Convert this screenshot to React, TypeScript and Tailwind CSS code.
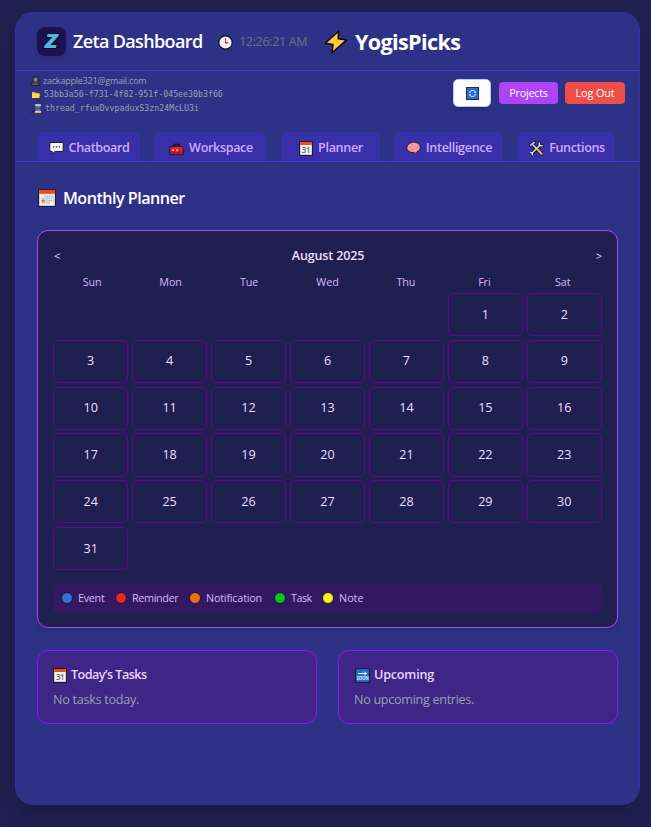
import type { ReactNode } from 'react';

type IconProps = { className?: string };

function Logo() {
  return (
    <svg viewBox="0 0 29 29" className="h-[29px] w-[29px] shrink-0 rounded-[8px] bg-[#1d124f] shadow-md">
      <text
        x="14.4"
        y="21.3"
        textAnchor="middle"
        fontFamily="Open Sans, sans-serif"
        fontSize="19"
        fontWeight="800"
        fontStyle="italic"
        fill="#4fb8e0"
        stroke="#0b0a26"
        strokeWidth="2"
        strokeLinejoin="round"
        paintOrder="stroke"
        textLength="12.6"
        lengthAdjust="spacingAndGlyphs"
      >
        Z
      </text>
    </svg>
  );
}

function Clock({ className }: IconProps) {
  return (
    <svg viewBox="0 0 14 14" className={className}>
      <circle cx="7" cy="7" r="6.3" fill="#f3f3f5" stroke="#15152c" strokeWidth="1.2" />
      <path d="M7 3v4.4" stroke="#d23b4b" strokeWidth="1.1" />
      <path d="M6.6 7.3h3" stroke="#35354a" strokeWidth="1" />
    </svg>
  );
}

function Bolt() {
  return (
    <svg viewBox="0 0 24 24" className="h-6 w-6 shrink-0">
      <path d="M14.6 1.2 1.2 13.2l7.8 1.4-1 8.3L22.8 9.9l-8.6-1.1Z" fill="#ffc83d" stroke="#0a0a12" strokeWidth="1.5" strokeLinejoin="round" />
    </svg>
  );
}

function Person() {
  return (
    <svg viewBox="0 0 9 10" className="h-[10px] w-[9px] shrink-0">
      <path d="M.5 9.6V8.2q.2-1.4 2.3-1.6Q1.4 5.4 1.5 3.4 1.8.6 4.5.5 7.2.6 7.5 3.4q.1 2-1.3 3.2 2.1.2 2.3 1.6v1.4Z" fill="#555557" stroke="#15151f" strokeWidth=".8" />
      <circle cx="4.5" cy="3.5" r="1.5" fill="#8c8c8e" />
    </svg>
  );
}

function Folder() {
  return (
    <svg viewBox="0 0 10 8" className="h-[8px] w-[10px] shrink-0">
      <path d="M.5.6h3l1 .9h4v1h1L8.6 7.5H.5Z" fill="#ffd766" stroke="#1b1730" strokeWidth=".7" />
      <path d="M1 2.2h7.6" stroke="#c48d22" strokeWidth=".5" />
    </svg>
  );
}

function Thread() {
  return (
    <svg viewBox="0 0 11 11" className="h-[11px] w-[11px] shrink-0">
      <path d="M.4 9.5 4 7.6" stroke="#141432" strokeWidth="1.4" />
      <path d="M3.8.7h6.6v2l-.9.8v4l1 .8v2h-7v-2l1-.8v-4l-.8-.8Z" fill="#e6bd95" stroke="#1a1838" strokeWidth=".6" />
      <path d="M4.6 3.2h4.7v4.5H4.6Z" fill="#2f71d2" />
      <path d="M4.7 5.3h4.5" stroke="#1a4a9c" strokeWidth=".5" />
    </svg>
  );
}

function Refresh() {
  return (
    <svg viewBox="0 0 13 13" className="h-[13px] w-[13px]">
      <rect x=".5" y=".5" width="12" height="12" fill="#2b6ccf" stroke="#1c2b4a" />
      <path d="M3.5 6A3.1 3.1 0 0 1 9.3 5M9.5 7A3.1 3.1 0 0 1 3.7 8" fill="none" stroke="#d6e8ff" strokeWidth="1" />
      <path d="M9.9 4v1.9H8ZM3.1 9V7.1H5Z" fill="#d6e8ff" />
    </svg>
  );
}

function Chat() {
  return (
    <svg viewBox="0 0 15 14" className="h-[14px] w-[15px] shrink-0">
      <path d="M.8 1.5h13.4v8.9h-8l-3 2.6v-2.6H.8Z" fill="#f5f5f6" stroke="#17172b" strokeLinejoin="round" />
      <path d="M4 5.8h1.3M6.9 5.8h1.3M9.8 5.8h1.3" stroke="#2b2b38" strokeWidth="1.3" />
    </svg>
  );
}

function Toolbox() {
  return (
    <svg viewBox="0 0 15 13" className="mt-[3px] h-[13px] w-[15px] shrink-0">
      <path d="M4.7 4V1.6h5.6V4" fill="none" stroke="#191626" strokeWidth="1.5" />
      <path d="M.8 5.2Q1.1 3.4 3 3.3h9q1.9.1 2.2 1.9v6.5H.8Z" fill="#dc2430" stroke="#191626" />
      <path d="M1.3 7.9h12.4v3.3H1.3Z" fill="#b01825" />
      <path d="M4 6.2v2M8 6.2v2" stroke="#f5d5d7" strokeWidth="1.5" />
    </svg>
  );
}

function Calendar31({ className }: IconProps) {
  return (
    <svg viewBox="0 0 14 15" className={className}>
      <rect x=".6" y=".6" width="12.8" height="13.8" fill="#f1f1f1" stroke="#17172b" strokeWidth="1.1" />
      <path d="M1.1 1h11.8v3H1.1Z" fill="#f04a24" />
      <text x="7" y="12" textAnchor="middle" fontSize="8" fill="#6a6a70" fontFamily="Open Sans, sans-serif">31</text>
    </svg>
  );
}

function CalendarGrid() {
  return (
    <svg viewBox="0 0 18 18" className="h-[18px] w-[18px] shrink-0">
      <rect x=".6" y=".6" width="16.8" height="16.8" fill="#eeeeef" stroke="#17172b" strokeWidth="1.1" />
      <path d="M1.1 1.1h15.8v3.7H1.1Z" fill="#ee4420" />
      <path d="M6.5 7.2h9M3.5 9.5h12M3.5 11.8h12M3.5 14.1h8.5" stroke="#b5b5b9" strokeWidth="1.5" strokeDasharray="1.5 .8" />
      <path d="M3.5 11.8h3.6M5.3 10.2v3.3" stroke="#ef6248" strokeWidth="1.2" />
    </svg>
  );
}

function Brain() {
  return (
    <svg viewBox="0 0 15 14" className="h-[14px] w-[15px] shrink-0">
      <path d="M.7 7.6Q.3 4.3 3.3 2.6 6 .3 9 1.1q3.6.4 4.9 3.4 1.2 3-.8 5.200l-2.100 1q-.2 2.100-1.700 2.500-1.300-.3-1.700-1.900-3.100.9-4.600-.9Q1.100 9.800.7 7.600Z" fill="#f79aa8" stroke="#221528" strokeWidth="1" />
      <path d="M3 6.4q1.5-.9 2.600.3M6 3.200q.2 1.700 2 1.700M9 7.500q1.500-1.700 3-.6M4.500 9q2-1.200 3.500.2" fill="none" stroke="#d45f7a" strokeWidth=".6" />
      <path d="m8.200 11.200 2.300-.2q-.2 1.500-1.300 1.700Z" fill="#c22d35" />
    </svg>
  );
}

function Tools() {
  return (
    <svg viewBox="0 0 15 15" className="h-[15px] w-[15px] shrink-0" strokeLinecap="round">
      <path d="M3 12.3 11 4" stroke="#15152a" strokeWidth="3.6" />
      <path d="m3.5 3.5 9 9" stroke="#15152a" strokeWidth="3.6" />
      <path d="M1.7 4.3 5.3 1.5" stroke="#15152a" strokeWidth="3.2" />
      <path d="M10.3 1.9v2.8h3" fill="none" stroke="#15152a" strokeWidth="3.2" />
      <path d="m4 4 3.6 3.6" stroke="#d9dce0" strokeWidth="1.5" />
      <path d="M1.7 4.2 5.2 1.5" stroke="#c3c7cc" strokeWidth="1.7" />
      <path d="M3 12.3 11 4M10.3 1.9v2.8h3M1.8 11.5l1.3.7.4 1.3" fill="none" stroke="#d9dce0" strokeWidth="1.5" />
      <path d="m8.5 8.6 4.1 4.1" stroke="#f5b82e" strokeWidth="2.1" />
    </svg>
  );
}

function Soon() {
  return (
    <svg viewBox="0 0 15 15" className="h-[15px] w-[15px] shrink-0">
      <rect x=".6" y=".6" width="13.8" height="13.8" fill="#2b6ccf" stroke="#14203f" strokeWidth="1.2" />
      <path d="M3 5.5h8.500M9.500 4l2 1.500-2 1.500" fill="none" stroke="#eef5ff" strokeWidth="1" />
      <text x="7.5" y="12.4" textAnchor="middle" fontSize="4.3" fontWeight="700" fill="#d6e8ff" fontFamily="Open Sans, sans-serif">SOON</text>
    </svg>
  );
}

function Tab({ size, children }: { size: string; children: ReactNode }) {
  return (
    <button className={`flex h-[29px] items-center justify-center gap-[5px] rounded-t-[7px] bg-[#3730a8] pt-[3px] text-[12.6px] font-semibold text-[#d4a8ff] ${size}`}>
      {children}
    </button>
  );
}

const weekdays = ['Sun', 'Mon', 'Tue', 'Wed', 'Thu', 'Fri', 'Sat'];
const leadingBlanks = 5;
const days = Array.from({ length: 31 }, (_, i) => i + 1);

const legend = [
  { label: 'Event', dot: 'bg-[#3470d8]', text: 'w-[26px] tracking-[-0.3px]' },
  { label: 'Reminder', dot: 'bg-[#e32626]', text: 'w-[46px] tracking-[-0.36px]' },
  { label: 'Notification', dot: 'bg-[#f36c14]', text: 'w-[57px] tracking-[-0.2px]' },
  { label: 'Task', dot: 'bg-[#0cc51c]', text: 'w-[20px] tracking-[-0.5px]' },
  { label: 'Note', dot: 'bg-[#f8f21f]', text: 'w-[24px]' },
];

export default function App() {
  return (
    <div className="h-[827px] w-[651px] overflow-hidden whitespace-nowrap bg-[#1f2050] pl-[15px] pt-3 font-['Open_Sans','Noto_Sans',sans-serif]">
      <div className="h-[793px] w-[625px] rounded-[18px] border border-[#352fa6] bg-[#2e3287] shadow-xl">
        <header className="flex h-[58px] items-center border-b border-[#4338ca] pl-[21px]">
          <Logo />
          <h1 className="ml-[7px] w-[145px] text-[18px] font-semibold tracking-[-0.64px] text-white">Zeta Dashboard</h1>
          <Clock className="mt-[2px] h-[15px] w-[15px] shrink-0" />
          <span className="ml-[6px] w-[85px] pt-[2px] text-[12.6px] tracking-[-0.38px] text-[#6a7282]">12:26:21 AM</span>
          <Bolt />
          <span className="ml-[7px] pt-px text-[21.6px] font-bold tracking-[-0.65px] text-white">YogisPicks</span>
        </header>

        <div className="flex h-[61px] justify-between pl-[15px] pr-[14px]">
          <div className="pt-[3px] text-[9px] text-[#99a1af]">
            <div className="flex h-[14px] items-center gap-[3px]">
              <Person />
              <span className="tracking-[-0.22px]">zackapple321@gmail.com</span>
            </div>
            <div className="flex h-[13px] items-center gap-[3px]">
              <Folder />
              <span className="font-['DejaVu_Sans_Mono',monospace] text-[8.25px]">53bb3a56-f731-4f82-951f-045ee30b3f66</span>
            </div>
            <div className="flex h-[14px] items-center gap-[3px]">
              <Thread />
              <span className="font-['DejaVu_Sans_Mono',monospace] text-[8.25px]">thread_rfuxDvvpaduxS3zn24McLU3i</span>
            </div>
          </div>
          <div className="mt-2 flex h-[28px] items-center gap-[7px] text-[10.8px] text-white">
            <button className="mr-px flex h-7 w-[38px] items-center justify-center rounded-[5px] border border-[#a9c8ff] bg-white shadow-md">
              <Refresh />
            </button>
            <button className="h-[22px] w-[59px] rounded-[4px] bg-[#ad44f6] tracking-[-0.25px]">Projects</button>
            <button className="h-[22px] w-[60px] rounded-[4px] bg-[#ed4e48] tracking-[-0.1px]">Log Out</button>
          </div>
        </div>

        <nav className="flex h-[30px] gap-[14px] border-b border-[#4338ca] pl-[21px]">
          <Tab size="w-[103px] pl-px tracking-[-0.4px]"><Chat />Chatboard</Tab>
          <Tab size="w-[112px] pl-[2px] tracking-[-0.36px]"><Toolbox />Workspace</Tab>
          <Tab size="ml-px w-[99px] pl-px tracking-[-0.34px]"><Calendar31 className="h-[15px] w-[14px] shrink-0" />Planner</Tab>
          <Tab size="w-[109px] pl-px tracking-[-0.34px]"><Brain />Intelligence</Tab>
          <Tab size="w-[98px] pl-[2px] tracking-[-0.42px]"><Tools />Functions</Tab>
        </nav>

        <main className="px-[21px]">
          <h2 className="flex h-[68px] items-center gap-[7px] pl-px pt-[4px] text-[16.2px] font-semibold tracking-[-0.54px] text-white">
            <CalendarGrid />
            Monthly Planner
          </h2>

          <section className="h-[398px] rounded-[11px] border border-[#ad46ff] bg-[#1f2050] px-[15px] pt-[15px] shadow-md">
            <div className="flex h-5 items-center justify-between text-[12.6px] text-[#f0dfff]">
              <button className="pl-px text-[11px]">&lt;</button>
              <span className="font-semibold tracking-[-0.19px]">August 2025</span>
              <button className="text-[11px]">&gt;</button>
            </div>
            <div className="mt-[6px] grid h-5 grid-cols-7 items-center text-center text-[10.8px] tracking-[-0.1px] text-[#dab2ff]">
              {weekdays.map((name) => (
                <span key={name}>{name}</span>
              ))}
            </div>
            <div className="mt-px grid grid-cols-7 gap-[3.6px]">
              {Array.from({ length: leadingBlanks }, (_, i) => (
                <span key={`blank-${i}`} />
              ))}
              {days.map((day) => (
                <button key={day} className="flex h-[43.2px] items-center justify-center rounded-[5px] border border-[#5a0a88] pt-px text-[12.6px] text-[#f0dfff]">
                  {day}
                </button>
              ))}
            </div>
            <div className="mt-[13.6px] flex h-[29px] items-center gap-[11px] rounded-[5px] bg-[#331a60] pl-2 text-[10.8px] text-[#dab2ff]">
              {legend.map(({ label, dot, text }) => (
                <span key={label} className="flex items-center gap-[5px]">
                  <i className={`h-3 w-3 rounded-full border border-[#181630] ${dot}`} />
                  <span className={text}>{label}</span>
                </span>
              ))}
            </div>
          </section>

          <div className="mt-[22px] grid grid-cols-2 gap-[21px] text-[12.6px]">
            <section className="h-[74px] rounded-[11px] border border-[#9810fa] bg-[#3f2585] px-[15px] pt-[14px]">
              <h3 className="flex h-5 items-center gap-1 font-semibold tracking-[-0.52px] text-[#e9d4ff]">
                <Calendar31 className="h-[15px] w-[14px] shrink-0" />
                Today’s Tasks
              </h3>
              <p className="mt-[5px] h-5 leading-5 tracking-[-0.27px] text-[#99a1af]">No tasks today.</p>
            </section>
            <section className="h-[74px] rounded-[11px] border border-[#9810fa] bg-[#3f2585] px-[15px] pt-[14px]">
              <h3 className="flex h-5 items-center gap-1 pl-px font-semibold tracking-[-0.2px] text-[#e9d4ff]">
                <Soon />
                Upcoming
              </h3>
              <p className="mt-[5px] h-5 leading-5 tracking-[-0.3px] text-[#99a1af]">No upcoming entries.</p>
            </section>
          </div>
        </main>
      </div>
    </div>
  );
}
